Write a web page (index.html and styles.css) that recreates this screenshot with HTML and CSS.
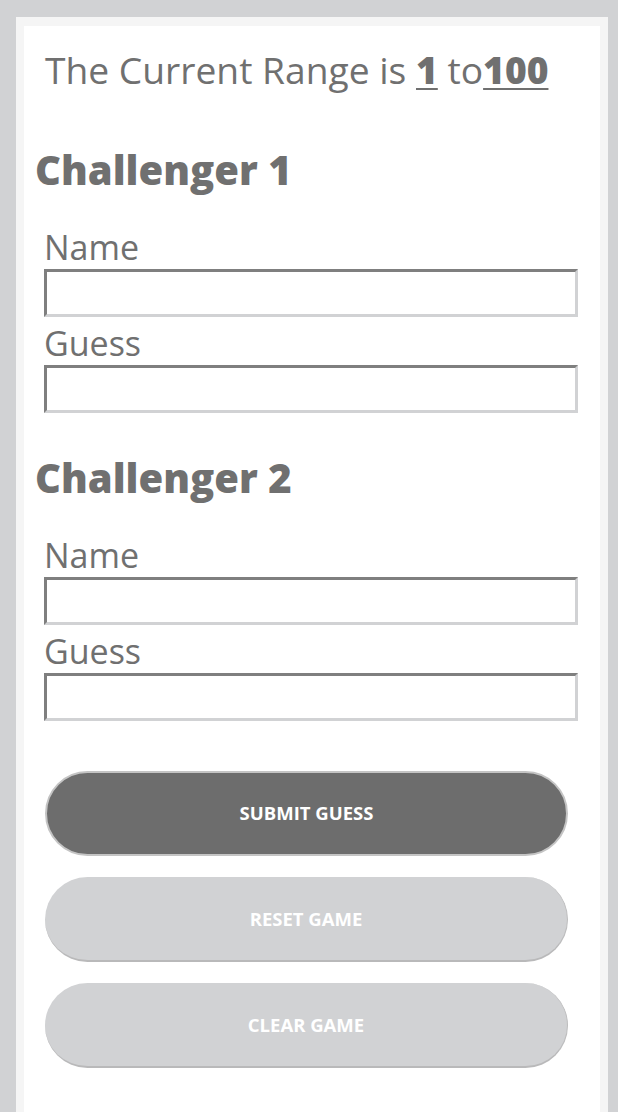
FILE: index.html
```html
<!DOCTYPE html>
<html lang="en">
<head>
<meta charset="utf-8">
<title>Number Guesser</title>
<link rel="stylesheet" href="styles.css">
</head>
<body>
<div class="frame">
  <main class="card">
    <p class="range">The Current Range is <span class="num">1</span> to<span class="num">100</span></p>

    <section class="challenger">
      <h2 class="heading">Challenger 1</h2>
      <div class="fields">
        <label class="label" for="n1">Name</label>
        <input class="field" id="n1" type="text">
        <label class="label" for="g1">Guess</label>
        <input class="field" id="g1" type="text">
      </div>
    </section>

    <section class="challenger second">
      <h2 class="heading">Challenger 2</h2>
      <div class="fields">
        <label class="label" for="n2">Name</label>
        <input class="field" id="n2" type="text">
        <label class="label" for="g2">Guess</label>
        <input class="field" id="g2" type="text">
      </div>
    </section>

    <div class="actions">
      <button class="btn primary" type="button">Submit Guess</button>
      <button class="btn muted" type="button">Reset Game</button>
      <button class="btn muted" type="button">Clear Game</button>
    </div>
  </main>
</div>
</body>
</html>
```
FILE: styles.css
```css
* { box-sizing: border-box; }

html, body {
  margin: 0;
  padding: 0;
}

body {
  background: #d1d2d4;
  font-family: "Open Sans", "Liberation Sans", sans-serif;
  color: #707070;
  padding: 17px 0 0 16px;
  height: 1112px;
  overflow: hidden;
}

.frame {
  width: 592px;
  background: #f5f5f5;
  padding: 9px 8px 0 8px;
  min-height: 1095px;
}

.card {
  background: #ffffff;
  padding: 22px 0 40px 11px;
  min-height: 1086px;
  display: flex;
  flex-direction: column;
}

.range {
  margin: 0 0 0 10px;
  font-size: 37.2px;
  line-height: 44px;
  font-weight: 400;
}

.num {
  font-weight: 800;
  text-decoration: underline;
  text-underline-offset: 4px;
  text-decoration-thickness: 2px;
}

.challenger {
  margin-top: 54px;
}

.challenger.second {
  margin-top: 41px;
}

.heading {
  margin: 0;
  font-size: 40px;
  line-height: 48px;
  font-weight: 800;
}

.fields {
  display: flex;
  flex-direction: column;
  margin-top: 36px;
  padding-left: 9px;
}

.label {
  font-size: 34px;
  line-height: 34px;
  margin-bottom: 5px;
}

.field {
  width: 534px;
  height: 48px;
  margin: 0 0 9px 0;
  border-style: solid;
  border-width: 3px;
  border-color: #7f7f7f #d1d2d4 #d1d2d4 #7f7f7f;
  background: #fff;
  font: inherit;
  font-size: 20px;
}

.field:last-child {
  margin-bottom: 0;
}

.actions {
  display: flex;
  flex-direction: column;
  gap: 21px;
  margin-top: 50px;
  padding-left: 10px;
}

.btn {
  width: 523px;
  height: 85px;
  border-radius: 43px;
  padding: 0 0 3px 0;
  font-family: "Open Sans", "Liberation Sans", sans-serif;
  font-size: 18.5px;
  font-weight: 700;
  text-transform: uppercase;
  color: #ffffff;
  cursor: pointer;
}

.primary {
  background: #6d6d6d;
  border: 2px solid #c4c4c4;
}

.muted {
  background: #d1d2d4;
  border: none;
  border-bottom: 2px solid #b9b9ba;
  border-right: 1px solid #bdbdbe;
  padding: 0;
}
```
